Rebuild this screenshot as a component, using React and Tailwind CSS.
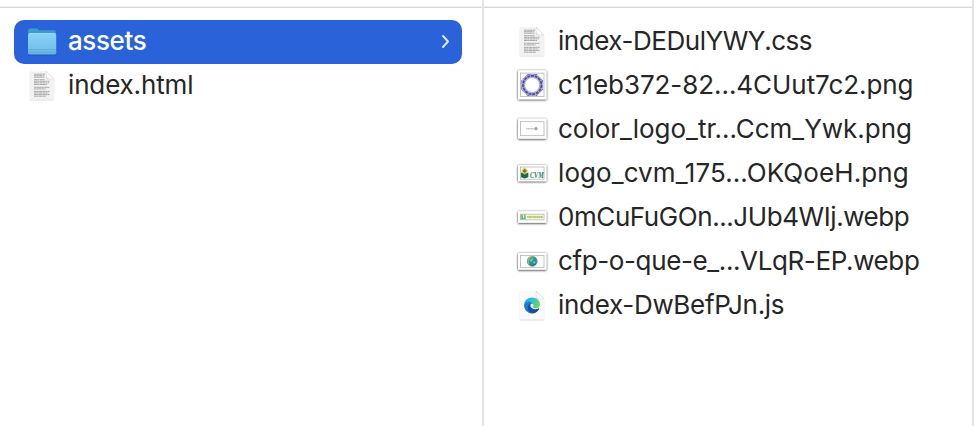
import React from "react";

function FolderIcon() {
  return (
    <svg className="size-8 shrink-0 overflow-visible" viewBox="0 0 32 32">
      <defs>
        <linearGradient id="folderFront" x1="0" y1="0" x2="0" y2="1">
          <stop offset="0" stopColor="#8bd2f6" />
          <stop offset="1" stopColor="#6cbcea" />
        </linearGradient>
      </defs>
      <path d="M2 28.4h28v.6q0 .6-1 .6H3q-1 0-1-.6z" fill="#1d4693" opacity=".55" />
      <path d="M2 5.2Q2 2.400 4.400 2.400h5.100c1.400 0 2 .3 2.800 1 .7.600 1.300.800 2.500.800h13Q30 4.200 30 6.400V12H2z" fill="#3f9bcb" />
      <rect x="2" y="7.200" width="28.200" height="21.100" rx="1.600" fill="url(#folderFront)" />
      <path d="M3 7.700h26" stroke="#a5e0fb" strokeWidth=".8" />
      <path d="M2 23.600h28.200" stroke="#58a5d2" strokeWidth=".8" />
      <path d="M2 25h28.200v1.700q0 1.600-1.600 1.600h-25Q2 28.300 2 26.700z" fill="#65b3df" />
    </svg>
  );
}

function Page({ children }) {
  return (
    <svg className="size-8 shrink-0 overflow-visible" viewBox="0 0 32 32">
      <defs>
        <linearGradient id="pageFold" x1="0" y1="1" x2="1" y2="0">
          <stop offset="0" stopColor="#dedede" />
          <stop offset=".3" stopColor="#fdfdfd" />
          <stop offset="1" stopColor="#f0f0f0" />
        </linearGradient>
        <filter id="pageShadow" x="-20%" y="-20%" width="140%" height="140%">
          <feDropShadow dx="0" dy=".4" stdDeviation=".7" floodOpacity=".36" />
        </filter>
      </defs>
      <path d="M5.200 1h15.200L28.200 8.800V28q0 1.500-1.500 1.500H5.200q-1.500 0-1.500-1.500V2.500Q3.700 1 5.200 1z" fill="#fafafa" filter="url(#pageShadow)" />
      {children}
      <path d="M20.200 1.200L28 9h-6.300q-1.500 0-1.500-1.500z" fill="url(#pageFold)" stroke="#c4c4c4" strokeWidth=".4" />
    </svg>
  );
}

function TextFileIcon() {
  return (
    <Page>
      <path d="M5 1.300h15.300L28 9v19q0 1.200-1.200 1.200H5q-1 0-1-1.200V2.500q0-1.200 1-1.200z" fill="#f2f2f2" />
      <g stroke="#a2a2a2" strokeWidth=".95" fill="none">
        <path d="M8 4.200h11M8 5.700h10M8 7.200h10.500" strokeDasharray="2.700 .35 1.900 .2 3.300 .4" />
        <path d="M8 9.700h10.500M8 11.300h15.500M8 12.900h14.800M8 14.500h13" strokeDasharray="3.200 .25 1.700 .4 2.500 .2" />
        <path d="M8 17.300h15.500M8 18.900h11.500" strokeDasharray="2 .4 3.400 .2 1.700 .3" />
        <path d="M8 21.400h15.500M8 23h14.500M8 24.600h15.500M8 26.200h12" strokeDasharray="2.800 .2 1.300 .4 3.700 .3" />
      </g>
    </Page>
  );
}

function EdgeFileIcon() {
  return (
    <Page>
      <defs>
        <linearGradient id="edgeTop" x1="0" y1="0.200" x2="1" y2=".5">
          <stop offset="0" stopColor="#24a9e4" />
          <stop offset=".5" stopColor="#2fc2ce" />
          <stop offset="1" stopColor="#71d954" />
        </linearGradient>
        <linearGradient id="edgeBody" x1="0" y1="0" x2=".8" y2="1">
          <stop offset="0" stopColor="#1b91dc" />
          <stop offset="1" stopColor="#1457ad" />
        </linearGradient>
      </defs>
      <g transform="translate(8 7.400) scale(.667)">
        <path d="M.1 10.800C1 7 3.400 5.500 6.300 5.500c4.500 0 7.500 3.200 7.500 6 0 .7-.3 1.300-.7 1.800-1.200 2.100 1 4.200 4.500 4.200 2 0 3.200-.4 4.400-1 .6-.2.900.2.600.8C20.400 21.400 16.600 24 12 24 5.300 24-.4 18.500.1 10.800z" fill="url(#edgeBody)" />
        <path d="M.1 10.800C.7 4.500 5.500.1 12 .1c7.100 0 12 4.800 12 10.100 0 3.700-2.600 6.300-6.400 6.300-2.300 0-4.400-.8-4.400-2 0-.7.800-1 .8-2.800 0-2.800-2.800-5.600-7.200-5.600C3.300 6.100.6 8 .1 10.800z" fill="url(#edgeTop)" />
        <path d="M9.200 9.100c-3 2.200-4 5.400-2.700 8.600 1.200 3 3.600 5.400 7 6.100 3.600-.7 6.600-2.600 8.500-5.400.8-1.300.4-1.900-.6-1.500-3.200 1.500-7.200 1.100-9.400-1.300-1.900-2.200-1.700-5.300.5-6.100-.8-.8-2.100-1.100-3.300-.4z" fill="#174fa3" />
        <path d="M10.700 9.300c-1.700 1.700-1.500 4.500.3 6.400 1.700 1.700 4.500 2.300 6.900 2l-.3-1.200c-2.300 0-4.400-.8-4.400-2 0-.7.800-1 .8-2.500 0-1.500-1.400-2.900-3.300-2.700z" fill="#e6f4fb" />
      </g>
    </Page>
  );
}

// Photo style thumbnail: white mount, soft shadow and a thin picture edge.
function Thumb({ top, height, inset, children }) {
  return (
    <svg className="size-8 shrink-0 overflow-visible" viewBox="0 0 32 32">
      <defs>
        <filter id="thumbShadow" x="-20%" y="-40%" width="140%" height="190%">
          <feDropShadow dx="0" dy=".6" stdDeviation=".95" floodOpacity=".9" />
        </filter>
      </defs>
      <rect x="2" y={top} width="28.400" height={height} fill="#fff" filter="url(#thumbShadow)" />
      <rect x="4.500" y={top + inset} width="23.500" height={height - inset * 2} fill="#fff" stroke="#b4b4b4" strokeWidth=".8" />
      {children}
    </svg>
  );
}

function SealIcon() {
  return (
    <Thumb top={0.3} height={29} inset={2.8}>
      <path d="M11.900 4.700h8.600l6 6v8.600l-6 6h-8.600l-6-6v-8.600z" fill="none" stroke="#6b66b4" strokeWidth="1.200" strokeDasharray="4.500 .6" />
      <circle cx="16.200" cy="15" r="9.300" fill="none" stroke="#b4b1de" strokeWidth="3" />
      <circle cx="16.200" cy="15" r="9.200" fill="none" stroke="#4e489b" strokeWidth="1.700" strokeDasharray="3 .8" />
      <circle cx="16.200" cy="15" r="7.500" fill="none" stroke="#7772bc" strokeWidth=".6" />
    </Thumb>
  );
}

function ColorLogoIcon() {
  return (
    <Thumb top={4.7} height={20} inset={3}>
      <path d="M10.300 14.700h8.200" stroke="#bdbdc1" strokeWidth="1.400" strokeDasharray="1.200 .4" />
      <circle cx="20" cy="14.600" r="1.600" fill="#9292b5" />
      <circle cx="20" cy="14.600" r=".5" fill="#d5d5ea" />
    </Thumb>
  );
}

function CvmIcon() {
  return (
    <Thumb top={7} height={16.2} inset={2}>
      <path d="M5 14.500l3.600 1.200 3.800-1.200v4.700l-3.800 1.200L5 19.200z" fill="#176b52" />
      <path d="M8.600 9.500l3.300 3.200-3.300 3.600-3.300-3.600z" fill="#f0b51c" />
      <path d="M5.500 13.800l3.100 2.700 3.300-2.700" fill="none" stroke="#e2b832" strokeWidth=".7" />
      <path d="M8.600 11l1.900 2-1.900 1.700L6.700 13z" fill="#498044" />
      <text x="14" y="20.300" textLength="13.600" lengthAdjust="spacingAndGlyphs" fontSize="7.500" fontWeight="700" fontStyle="italic" fontFamily="Liberation Serif, serif" fill="#28766a">CVM</text>
    </Thumb>
  );
}

function BannerIcon() {
  return (
    <Thumb top={9.2} height={11.6} inset={3}>
      <rect x="4.700" y="12.500" width="5" height="5" fill="#8fc44b" />
      <path d="M5 17l2-3 2.300 1v2H6.500z" fill="#4ab2c8" />
      <path d="M7.500 13v3.200" stroke="#fff" strokeWidth=".9" />
      <path d="M11.200 15h15.800" stroke="#b4cf53" strokeWidth="2.400" strokeDasharray="1.600 .25 2 .25 1.200 .3" />
      <path d="M11.200 15h15.800" stroke="#d7c56a" strokeWidth=".5" />
    </Thumb>
  );
}

function GlobeIcon() {
  return (
    <Thumb top={7} height={16.7} inset={2.4}>
      <circle cx="16.200" cy="15.300" r="5.300" fill="#28a1a4" />
      <path d="M19 10.800A5.200 5.200 0 1 0 17.500 20.400Q11 18.600 13.700 13.500 15.300 11 19 10.800z" fill="#a3b952" />
      <circle cx="16.800" cy="15" r="3.500" fill="#2590ac" />
      <path d="M14 14q1.400-2 3.500-1.600l-.6 1.900-1.400 1-1 1.100zM17.600 15.200l2 .6-1.200 1.900-1.300-.9z" fill="#8bcd91" />
      <path d="M13.500 18.300q2.800 2.300 5.900-.2" fill="none" stroke="#235d83" strokeWidth=".8" />
    </Thumb>
  );
}

function FileRow({ icon, name, tracking }) {
  return (
    <li className="flex h-11 items-center gap-[10px] pl-[12px]">
      {icon}
      <span className={`-mt-0.5 whitespace-nowrap text-[26px] leading-8 ${tracking}`}>{name}</span>
    </li>
  );
}

const files = [
  { name: "index-DEDulYWY.css", icon: <TextFileIcon />, tracking: "tracking-[-0.46px]" },
  { name: "c11eb372-82...4CUut7c2.png", icon: <SealIcon />, tracking: "tracking-[-0.06px]" },
  { name: "color_logo_tr...Ccm_Ywk.png", icon: <ColorLogoIcon />, tracking: "tracking-[-0.02px]" },
  { name: "logo_cvm_175...OKQoeH.png", icon: <CvmIcon />, tracking: "tracking-[0.08px]" },
  { name: "0mCuFuGOn...JUb4WIj.webp", icon: <BannerIcon />, tracking: "tracking-[-0.43px]" },
  { name: "cfp-o-que-e_...VLqR-EP.webp", icon: <GlobeIcon />, tracking: "tracking-[-0.38px]" },
  { name: "index-DwBefPJn.js", icon: <EdgeFileIcon />, tracking: "tracking-[-0.3px]" },
];

export default function App() {
  return (
    <div className="flex h-[426px] w-[976px] overflow-hidden bg-white font-['Inter',sans-serif] text-[#262626]">
      <section className="flex w-[482px] flex-col">
        <div className="h-2 border-b border-[#d9d9d9] pt-[6px]"><div className="h-px bg-[#f0f0f0]" /></div>
        <ul className="px-[14px] pt-3 pr-5">
          <li className="flex h-11 items-center gap-[10px] rounded-[10px] bg-[#2962d9] pr-[10px] pl-3 text-white">
            <FolderIcon />
            <span className="-mt-0.5 flex-1 text-[26px] leading-8 font-medium tracking-[-0.4px]">assets</span>
            <svg className="h-4 w-3" viewBox="0 0 12 16" fill="none" stroke="#e4ebfb" strokeWidth="1.900" strokeLinecap="round" strokeLinejoin="round">
              <path d="M3 2l5 5.500L3 13" />
            </svg>
          </li>
          <FileRow icon={<TextFileIcon />} name="index.html" tracking="tracking-[-0.15px]" />
        </ul>
      </section>
      <div className="w-[2px] bg-[#e4e4e4]" />
      <section className="flex w-[488px] flex-col">
        <div className="h-2 border-b border-[#d9d9d9] pt-[6px]"><div className="h-px bg-[#f0f0f0]" /></div>
        <ul className="px-5 pt-3">
          {files.map((file) => (
            <FileRow key={file.name} {...file} />
          ))}
        </ul>
      </section>
      <div className="w-[2px] bg-[#e4e4e4]" />
    </div>
  );
}
